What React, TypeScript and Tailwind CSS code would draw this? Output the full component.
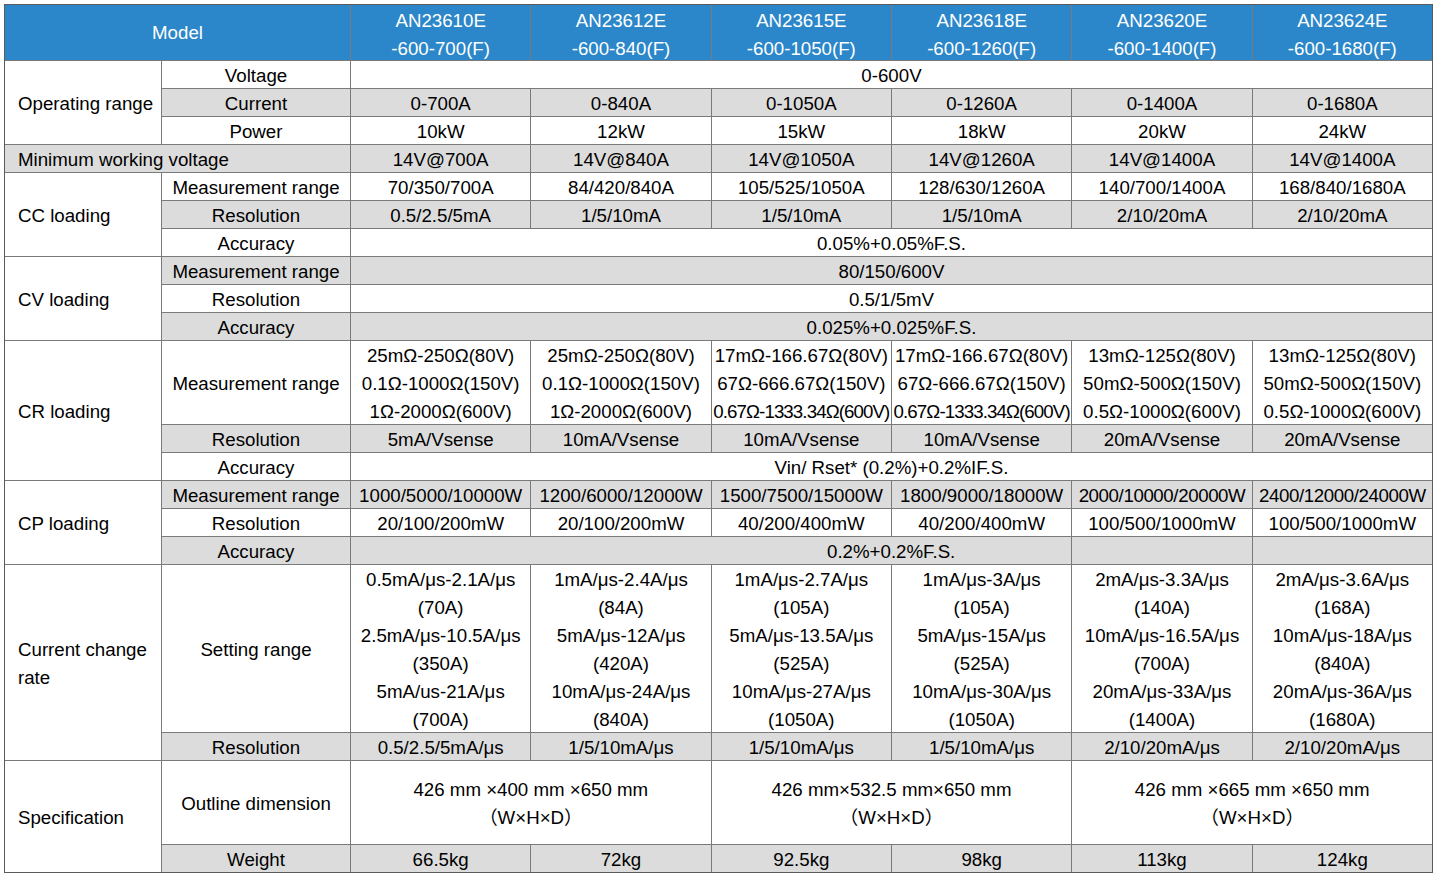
import React from 'react';

const G = 'bg-[#dcdcdc]';
const W = 'bg-white';

const models = [
  ['AN23610E', '-600-700(F)'],
  ['AN23612E', '-600-840(F)'],
  ['AN23615E', '-600-1050(F)'],
  ['AN23618E', '-600-1260(F)'],
  ['AN23620E', '-600-1400(F)'],
  ['AN23624E', '-600-1680(F)'],
];

const current = ['0-700A', '0-840A', '0-1050A', '0-1260A', '0-1400A', '0-1680A'];
const power = ['10kW', '12kW', '15kW', '18kW', '20kW', '24kW'];
const minVolt = ['14V@700A', '14V@840A', '14V@1050A', '14V@1260A', '14V@1400A', '14V@1400A'];
const ccRange = ['70/350/700A', '84/420/840A', '105/525/1050A', '128/630/1260A', '140/700/1400A', '168/840/1680A'];
const ccRes = ['0.5/2.5/5mA', '1/5/10mA', '1/5/10mA', '1/5/10mA', '2/10/20mA', '2/10/20mA'];

const crA = ['25mΩ-250Ω(80V)', '0.1Ω-1000Ω(150V)', '1Ω-2000Ω(600V)'];
const crB = ['17mΩ-166.67Ω(80V)', '67Ω-666.67Ω(150V)', '0.67Ω-1333.34Ω(600V)'];
const crC = ['13mΩ-125Ω(80V)', '50mΩ-500Ω(150V)', '0.5Ω-1000Ω(600V)'];
const crRange = [crA, crA, crB, crB, crC, crC];
const crRes = ['5mA/Vsense', '10mA/Vsense', '10mA/Vsense', '10mA/Vsense', '20mA/Vsense', '20mA/Vsense'];

const cpRange = ['1000/5000/10000W', '1200/6000/12000W', '1500/7500/15000W', '1800/9000/18000W', '2000/10000/20000W', '2400/12000/24000W'];
const cpRes = ['20/100/200mW', '20/100/200mW', '40/200/400mW', '40/200/400mW', '100/500/1000mW', '100/500/1000mW'];

const slew = [
  ['0.5mA/μs-2.1A/μs', '(70A)', '2.5mA/μs-10.5A/μs', '(350A)', '5mA/us-21A/μs', '(700A)'],
  ['1mA/μs-2.4A/μs', '(84A)', '5mA/μs-12A/μs', '(420A)', '10mA/μs-24A/μs', '(840A)'],
  ['1mA/μs-2.7A/μs', '(105A)', '5mA/μs-13.5A/μs', '(525A)', '10mA/μs-27A/μs', '(1050A)'],
  ['1mA/μs-3A/μs', '(105A)', '5mA/μs-15A/μs', '(525A)', '10mA/μs-30A/μs', '(1050A)'],
  ['2mA/μs-3.3A/μs', '(140A)', '10mA/μs-16.5A/μs', '(700A)', '20mA/μs-33A/μs', '(1400A)'],
  ['2mA/μs-3.6A/μs', '(168A)', '10mA/μs-18A/μs', '(840A)', '20mA/μs-36A/μs', '(1680A)'],
];
const slewRes = ['0.5/2.5/5mA/μs', '1/5/10mA/μs', '1/5/10mA/μs', '1/5/10mA/μs', '2/10/20mA/μs', '2/10/20mA/μs'];

const dims = ['426 mm ×400 mm ×650 mm', '426 mm×532.5 mm×650 mm', '426 mm ×665 mm ×650 mm'];
const weight = ['66.5kg', '72kg', '92.5kg', '98kg', '113kg', '124kg'];

function Cell({ children, className = '' }: { children?: React.ReactNode; className?: string }) {
  return (
    <div className={`flex flex-col items-center justify-center pt-[3px] text-center whitespace-nowrap leading-[28px] ${className}`}>
      {children}
    </div>
  );
}

function Group({ children, className = '' }: { children: React.ReactNode; className?: string }) {
  return <div className={`flex items-center bg-white pt-[3px] pl-[13px] pr-2 leading-[28px] ${className}`}>{children}</div>;
}

function Row({ values, bg, tight = [] }: { values: string[]; bg: string; tight?: number[] }) {
  return (
    <>
      {values.map((v, i) => (
        <Cell key={i} className={`${bg} ${tight.includes(i) ? 'tracking-[-0.4px]' : ''}`}>
          {v}
        </Cell>
      ))}
    </>
  );
}

export default function App() {
  return (
    <div className="min-h-screen bg-white p-1 font-['Liberation_Sans','Noto_Sans_CJK_SC',Arial,sans-serif] text-[18.7px] text-black">
      <div className="grid w-[1429px] grid-cols-[156px_188px_repeat(6,minmax(0,1fr))] auto-rows-[27px] gap-px border border-[#5a5a5a] bg-[#7a7a7a]">
        {/* header */}
        <Cell className="col-span-2 row-span-2 bg-[#2b87c9] !pt-0 text-white">Model</Cell>
        {models.map(([a, b]) => (
          <Cell key={a} className="row-span-2 bg-[#2b87c9] !pt-[5px] text-white">
            <span>{a}</span>
            <span>{b}</span>
          </Cell>
        ))}

        {/* operating range */}
        <Group className="row-span-3 whitespace-nowrap">Operating range</Group>
        <Cell className={W}>Voltage</Cell>
        <Cell className={`col-span-6 ${W}`}>0-600V</Cell>
        <Cell className={G}>Current</Cell>
        <Row values={current} bg={G} />
        <Cell className={W}>Power</Cell>
        <Row values={power} bg={W} />

        <div className={`col-span-2 flex items-center pt-[3px] pl-[13px] leading-[28px] ${G}`}>Minimum working voltage</div>
        <Row values={minVolt} bg={G} />

        {/* CC */}
        <Group className="row-span-3">CC loading</Group>
        <Cell className={W}>Measurement range</Cell>
        <Row values={ccRange} bg={W} />
        <Cell className={G}>Resolution</Cell>
        <Row values={ccRes} bg={G} />
        <Cell className={W}>Accuracy</Cell>
        <Cell className={`col-span-6 ${W}`}>0.05%+0.05%F.S.</Cell>

        {/* CV */}
        <Group className="row-span-3">CV loading</Group>
        <Cell className={G}>Measurement range</Cell>
        <Cell className={`col-span-6 ${G}`}>80/150/600V</Cell>
        <Cell className={W}>Resolution</Cell>
        <Cell className={`col-span-6 ${W}`}>0.5/1/5mV</Cell>
        <Cell className={G}>Accuracy</Cell>
        <Cell className={`col-span-6 ${G}`}>0.025%+0.025%F.S.</Cell>

        {/* CR */}
        <Group className="row-span-5">CR loading</Group>
        <Cell className={`row-span-3 ${W}`}>Measurement range</Cell>
        {crRange.map((lines, i) => (
          <Cell key={i} className={`row-span-3 ${W}`}>
            {lines.map((l) => (
              <span key={l} className={l.startsWith('0.67') ? 'tracking-[-0.9px]' : ''}>
                {l}
              </span>
            ))}
          </Cell>
        ))}
        <Cell className={G}>Resolution</Cell>
        <Row values={crRes} bg={G} />
        <Cell className={W}>Accuracy</Cell>
        <Cell className={`col-span-6 ${W}`}>Vin/ Rset* (0.2%)+0.2%IF.S.</Cell>

        {/* CP */}
        <Group className="row-span-3">CP loading</Group>
        <Cell className={G}>Measurement range</Cell>
        <Row values={cpRange} bg={G} tight={[4, 5]} />
        <Cell className={W}>Resolution</Cell>
        <Row values={cpRes} bg={W} />
        <Cell className={G}>Accuracy</Cell>
        <Cell className={`col-span-4 pl-[360px] ${G}`}>0.2%+0.2%F.S.</Cell>
        <Cell className={G} />
        <Cell className={G} />

        {/* current change rate */}
        <Group className="row-span-7">Current change rate</Group>
        <Cell className={`row-span-6 ${W}`}>Setting range</Cell>
        {slew.map((lines, i) => (
          <Cell key={i} className={`row-span-6 ${W}`}>
            {lines.map((l, j) => (
              <span key={j}>{l}</span>
            ))}
          </Cell>
        ))}
        <Cell className={G}>Resolution</Cell>
        <Row values={slewRes} bg={G} />

        {/* specification */}
        <Group className="row-span-4">Specification</Group>
        <Cell className={`row-span-3 ${W}`}>Outline dimension</Cell>
        {dims.map((d) => (
          <Cell key={d} className={`col-span-2 row-span-3 ${W}`}>
            <span>{d}</span>
            <span>（W×H×D）</span>
          </Cell>
        ))}
        <Cell className={G}>Weight</Cell>
        <Row values={weight} bg={G} />
      </div>
    </div>
  );
}
